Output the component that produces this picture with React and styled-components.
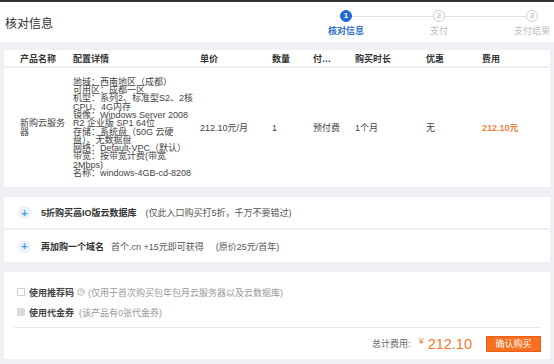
import React from "react";
import styled, { createGlobalStyle } from "styled-components";
import { CircleHelp } from "lucide-react";

const GlobalStyle = createGlobalStyle`
  * { box-sizing: border-box; }
  html, body {
    margin: 0;
    padding: 0;
    background: #eff0f4;
  }
  body {
    font-family: "Liberation Sans", "Noto Sans CJK SC", sans-serif;
    font-size: 9px;
    color: #333;
  }
`;

const Page = styled.div`
  width: 554px;
  height: 364px;
  border-top: 2px solid #333;
  display: flex;
  flex-direction: column;
  overflow: hidden;
`;

const Header = styled.header`
  height: 40px;
  flex: none;
  background: #fff;
  display: flex;
  align-items: center;
  padding-left: 5px;
`;

const Title = styled.h1`
  margin: 0;
  font-size: 12px;
  font-weight: normal;
  color: #333;
`;

const Steps = styled.ol`
  list-style: none;
  margin: 0 2px 0 auto;
  padding: 8px 0 0;
  align-self: stretch;
  display: flex;
  gap: 53px;
`;

const Step = styled.li`
  position: relative;
  width: 40px;
  display: flex;
  flex-direction: column;
  align-items: center;

  &:not(:last-child)::after {
    content: "";
    position: absolute;
    top: 6px;
    left: calc(50% + 6px);
    width: 81px;
    height: 1px;
    background: #e0e0e0;
  }
`;

const StepDot = styled.span`
  width: 12px;
  height: 12px;
  border-radius: 50%;
  display: flex;
  align-items: center;
  justify-content: center;
  font-size: 8px;
  font-weight: bold;
  line-height: 1;
  background: ${(p) => (p.$active ? "#1f6bd0" : "#fff")};
  color: ${(p) => (p.$active ? "#fff" : "#c4c4c4")};
  border: 1px solid ${(p) => (p.$active ? "#1f6bd0" : "#cfcfcf")};
`;

const StepLabel = styled.span`
  margin-top: 4px;
  font-size: 9px;
  line-height: 10px;
  white-space: nowrap;
  font-weight: ${(p) => (p.$active ? "bold" : "normal")};
  color: ${(p) => (p.$active ? "#2b6cc4" : "#bcbcbc")};
`;

const Main = styled.main`
  flex: 1;
  display: flex;
  flex-direction: column;
  gap: 10px;
  padding: 8px 4px 0;
`;

const Card = styled.section`
  background: #fff;
  height: ${(p) => p.$h}px;
  flex: none;
  display: flex;
  flex-direction: column;
`;

const COLS = "53px 127px 72px 41px 42px 71px 56px 1fr";

const HeadRow = styled.div`
  display: grid;
  grid-template-columns: ${COLS};
  align-items: center;
  height: 18px;
  padding-left: 16px;
  border-bottom: 2px solid #eff0f4;
  font-weight: bold;
  color: #333;
`;

const HeadCell = styled.div`
  white-space: nowrap;
  overflow: hidden;
  text-overflow: ellipsis;
  max-width: ${(p) => (p.$narrow ? "20px" : "none")};
`;

const BodyRow = styled.div`
  flex: 1;
  display: grid;
  grid-template-columns: ${COLS};
  align-items: center;
  padding-left: 16px;
  color: #444;
`;

const NameCell = styled.div`
  padding-right: 4px;
  line-height: 8.5px;
`;

const Config = styled.div`
  line-height: 8.3px;
  white-space: pre;
  color: #444;
`;

const Fee = styled.div`
  color: #f5833f;
  font-weight: bold;
`;

const AddonRow = styled.div`
  height: ${(p) => p.$h}px;
  display: flex;
  align-items: center;
  padding-left: 14px;
  & + & {
    border-top: 2px solid #eff0f4;
  }
`;

const PlusDot = styled.span`
  width: 13px;
  height: 13px;
  border-radius: 50%;
  background: #eef1f4;
  color: #3d9bf0;
  display: flex;
  align-items: center;
  justify-content: center;
  font-size: 11px;
  font-weight: bold;
  margin-right: 10px;
`;

const AddonTitle = styled.strong`
  color: #333;
`;

const Note = styled.span`
  margin-left: ${(p) => p.$gap}px;
  color: ${(p) => p.$color || "#555"};
`;

const Options = styled.div`
  padding: 10px 0 0 13px;
`;

const Option = styled.label`
  height: 20px;
  display: flex;
  align-items: center;
  color: #333;
`;

const Check = styled.span`
  width: 8px;
  height: 8px;
  margin-right: 4px;
  border: 1px solid ${(p) => (p.$disabled ? "#dcdcdc" : "#d0d0d0")};
  background: ${(p) => (p.$disabled ? "#dcdcdc" : "#fff")};
`;

const OptionLabel = styled.span`
  font-weight: bold;
  color: #444;
`;

const Help = styled(CircleHelp)`
  margin: 0 3px;
  color: #999;
`;

const Divider = styled.hr`
  margin: 5px 9px 0 10px;
  border: none;
  border-top: 1px solid #e6e8ec;
`;

const Footer = styled.div`
  height: 32px;
  display: flex;
  align-items: center;
  justify-content: flex-end;
  padding-right: 9px;
`;

const TotalLabel = styled.span`
  color: #666;
`;

const Yen = styled.span`
  color: #f5782d;
  font-size: 9px;
  margin: 0 4px 6px 8px;
`;

const Total = styled.span`
  color: #f5782d;
  font-size: 14.5px;
  margin-right: 14px;
`;

const BuyButton = styled.button`
  width: 55px;
  height: 16px;
  padding: 0;
  border: 1px solid #e8601a;
  background: #f8701f;
  color: #fff;
  font-family: inherit;
  font-size: 9px;
  cursor: pointer;
`;

const steps = ["核对信息", "支付", "支付结果"];

const config = [
  "地域：西南地区（成都）",
  "可用区：成都一区",
  "机型：系列2、标准型S2、2核\nCPU、4G内存",
  "镜像：Windows Server 2008\nR2 企业版 SP1 64位",
  "存储：系统盘（50G 云硬\n盘）、无数据盘",
  "网络：Default-VPC（默认）",
  "带宽：按带宽计费(带宽\n2Mbps)",
  "名称：windows-4GB-cd-8208",
];

export default function App() {
  return (
    <>
      <GlobalStyle />
      <Page>
        <Header>
          <Title>核对信息</Title>
          <Steps>
            {steps.map((s, i) => (
              <Step key={s}>
                <StepDot $active={i === 0}>{i + 1}</StepDot>
                <StepLabel $active={i === 0}>{s}</StepLabel>
              </Step>
            ))}
          </Steps>
        </Header>

        <Main>
          <Card $h={137}>
            <HeadRow>
              <HeadCell>产品名称</HeadCell>
              <HeadCell>配置详情</HeadCell>
              <HeadCell>单价</HeadCell>
              <HeadCell>数量</HeadCell>
              <HeadCell $narrow>付款方式</HeadCell>
              <HeadCell>购买时长</HeadCell>
              <HeadCell>优惠</HeadCell>
              <HeadCell>费用</HeadCell>
            </HeadRow>
            <BodyRow>
              <NameCell>新购云服务器</NameCell>
              <Config>
                {config.map((c) => (
                  <div key={c}>{c}</div>
                ))}
              </Config>
              <div>212.10元/月</div>
              <div>1</div>
              <div>预付费</div>
              <div>1个月</div>
              <div>无</div>
              <Fee>212.10元</Fee>
            </BodyRow>
          </Card>

          <Card $h={65}>
            <AddonRow $h={31}>
              <PlusDot>+</PlusDot>
              <AddonTitle>5折购买高IO版云数据库</AddonTitle>
              <Note $gap={9}>(仅此入口购买打5折，千万不要错过)</Note>
            </AddonRow>
            <AddonRow $h={34}>
              <PlusDot>+</PlusDot>
              <AddonTitle>再加购一个域名</AddonTitle>
              <Note $gap={7}>首个.cn +15元即可获得</Note>
              <Note $gap={12}>(原价25元/首年)</Note>
            </AddonRow>
          </Card>

          <Card $h={87}>
            <Options>
              <Option>
                <Check />
                <OptionLabel>使用推荐码</OptionLabel>
                <Help size={8} strokeWidth={2} />
                <Note $gap={0} $color="#999">(仅用于首次购买包年包月云服务器以及云数据库)</Note>
              </Option>
              <Option>
                <Check $disabled />
                <OptionLabel>使用代金券</OptionLabel>
                <Note $gap={5} $color="#999">(该产品有0张代金券)</Note>
              </Option>
            </Options>
            <Divider />
            <Footer>
              <TotalLabel>总计费用:</TotalLabel>
              <Yen>¥</Yen>
              <Total>212.10</Total>
              <BuyButton>确认购买</BuyButton>
            </Footer>
          </Card>
        </Main>
      </Page>
    </>
  );
}
